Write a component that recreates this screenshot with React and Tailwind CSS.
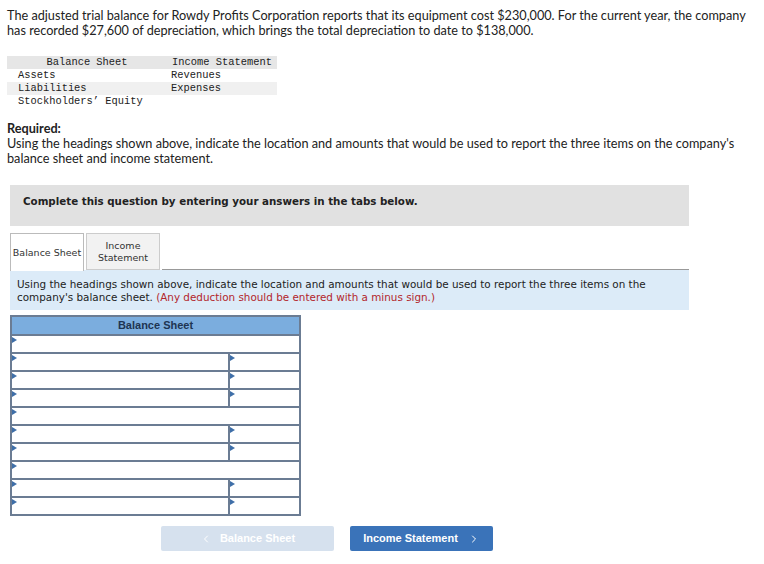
import { ChevronLeft, ChevronRight } from 'lucide-react'

const mono = { fontFamily: '"Liberation Mono", monospace' }

// tiny blue marker in the corner of each answer cell
const Marker = () => (
  <span className="absolute left-0 top-[1px] w-0 h-0 border-y-[3px] border-y-transparent border-l-[5px] border-l-[#3f6fa8]" />
)

const Cell = ({ className = '' }) => (
  <div className={`relative h-[16px] bg-white ${className}`}>
    <Marker />
  </div>
)

const Row = ({ split }) =>
  split ? (
    <div className="flex gap-[2px]">
      <Cell className="w-[216px]" />
      <Cell className="flex-1" />
    </div>
  ) : (
    <Cell />
  )

const rows = [false, true, true, true, false, true, true, false, true, true]

export default function App() {
  return (
    <div className="w-[764px] h-[564px] bg-white text-[#222] overflow-hidden">
      <div className="px-[7px] pt-[8px] text-[12.7px] leading-[15px] font-['Lato',sans-serif]">
        The adjusted trial balance for Rowdy Profits Corporation reports that its equipment cost $230,000. For the current year, the company has recorded $27,600 of depreciation, which brings the total depreciation to date to $138,000.
      </div>

      <div className="ml-[7px] mt-[18px] w-[270px] text-[10.4px] leading-[13px]" style={mono}>
        <div className="flex bg-[#e6e6e6]">
          <div className="w-[160px] text-center">Balance Sheet</div>
          <div className="flex-1 text-center">Income Statement</div>
        </div>
        <div className="flex">
          <div className="w-[160px] pl-[11px]">Assets</div>
          <div className="flex-1 pl-[4px]">Revenues</div>
        </div>
        <div className="flex bg-[#f0f0f0]">
          <div className="w-[160px] pl-[11px]">Liabilities</div>
          <div className="flex-1 pl-[4px]">Expenses</div>
        </div>
        <div className="flex">
          <div className="w-[160px] pl-[11px]">Stockholders’ Equity</div>
          <div className="flex-1" />
        </div>
      </div>

      <div className="px-[7px] mt-[13px] text-[12.7px] leading-[15px] font-['Lato',sans-serif]">
        <div className="font-bold">Required:</div>
        <div>
          Using the headings shown above, indicate the location and amounts that would be used to report the three items on the company's balance sheet and income statement.
        </div>
      </div>

      <div className="ml-[10px] w-[679px] font-['DejaVu_Sans',sans-serif]">
        <div className="mt-[19px] h-[41px] bg-[#e1e1e1] pl-[13px] pt-[10px] text-[10.3px] leading-[13px] font-bold text-[#222]">
          Complete this question by entering your answers in the tabs below.
        </div>

        <div className="mt-[7px] flex items-end gap-[2px] h-[37px] text-[9.5px] leading-[12px] text-[#333]">
          <div className="h-[38px] w-[74px] border border-[#bbb] border-b-0 bg-white flex items-center justify-center relative top-[1px]">
            Balance Sheet
          </div>
          <div className="h-[37px] w-[74px] border border-[#ccc] bg-[#f2f2f2] flex items-center justify-center text-center">
            Income<br />Statement
          </div>
          <div className="flex-1 border-b border-[#999]" />
        </div>

        <div className="h-[40px] bg-[#dcebf8] px-[7px] pt-[8px] text-[10.4px] leading-[12.5px] text-[#222]">
          Using the headings shown above, indicate the location and amounts that would be used to report the three items on the company's balance sheet. <span className="text-[#b3262b]">(Any deduction should be entered with a minus sign.)</span>
        </div>
      </div>

      <div className="ml-[10px] mt-[5px] w-[291px] bg-[#6b7c93] p-[2px] flex flex-col gap-[2px] font-['Liberation_Sans',sans-serif]">
        <div className="h-[17px] bg-[#7badde] flex items-center justify-center text-[11px] font-bold text-[#1e3552]">
          Balance Sheet
        </div>
        {rows.map((s, i) => (
          <Row key={i} split={s} />
        ))}
      </div>

      <div className="mt-[10px] flex gap-[16px] pl-[161px] font-['Liberation_Sans',sans-serif] text-[11px] font-bold text-white">
        <div className="w-[173px] h-[25px] bg-[#d6e1ee] rounded-[2px] flex items-center justify-center gap-[8px]">
          <ChevronLeft size={12} strokeWidth={2} />
          Balance Sheet
        </div>
        <div className="w-[143px] h-[25px] bg-[#3a73b9] rounded-[2px] flex items-center justify-center gap-[10px]">
          Income Statement
          <ChevronRight size={12} strokeWidth={2} />
        </div>
      </div>
    </div>
  )
}
